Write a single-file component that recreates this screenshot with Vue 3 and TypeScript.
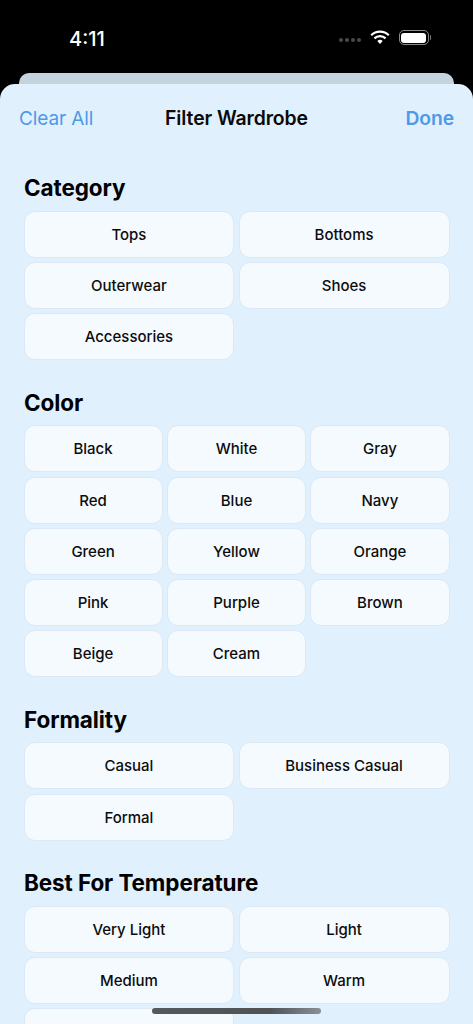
<script setup lang="ts">
interface Section {
  title: string
  cols: number
  items: string[]
}
const sections: Section[] = [
  { title: 'Category', cols: 2, items: ['Tops', 'Bottoms', 'Outerwear', 'Shoes', 'Accessories'] },
  { title: 'Color', cols: 3, items: ['Black', 'White', 'Gray', 'Red', 'Blue', 'Navy', 'Green', 'Yellow', 'Orange', 'Pink', 'Purple', 'Brown', 'Beige', 'Cream'] },
  { title: 'Formality', cols: 2, items: ['Casual', 'Business Casual', 'Formal'] },
  { title: 'Best For Temperature', cols: 2, items: ['Very Light', 'Light', 'Medium', 'Warm', ''] }
]
</script>

<template>
  <div class="screen">
    <div class="status">
      <span class="time">4:11</span>
      <div class="status-icons">
        <div class="dots"><i></i><i></i><i></i><i></i></div>
        <svg class="wifi" width="20" height="15" viewBox="0 0 20 15">
          <path d="M1.2 5.2a12.6 12.6 0 0 1 17.6 0" fill="none" stroke="#fff" stroke-width="2.2" />
          <path d="M4.4 8.4a8 8 0 0 1 11.2 0" fill="none" stroke="#fff" stroke-width="2.2" />
          <path d="M7.3 11.1a3.9 3.9 0 0 1 5.4 0L10 14z" fill="#fff" />
        </svg>
        <div class="battery"><div class="battery-fill"></div></div>
        <div class="battery-cap"></div>
      </div>
    </div>
    <div class="back-sheet"></div>
    <div class="sheet">
      <header class="nav">
        <span class="clear">Clear All</span>
        <span class="title">Filter Wardrobe</span>
        <span class="done">Done</span>
      </header>
      <section v-for="s in sections" :key="s.title" class="section">
        <h2>{{ s.title }}</h2>
        <div class="grid" :class="s.cols === 3 ? 'three' : 'two'">
          <button v-for="item in s.items" :key="item" class="chip">{{ item }}</button>
        </div>
      </section>
    </div>
    <div class="home"></div>
  </div>
</template>

<style>
html, body { margin: 0; background: #000; }
</style>

<style scoped>
.screen {
  position: relative;
  width: 473px;
  height: 1024px;
  overflow: hidden;
  background: #000;
  font-family: Inter, "Liberation Sans", sans-serif;
}
.status {
  height: 73px;
  display: flex;
  justify-content: space-between;
  align-items: flex-start;
  padding: 0 42px 0 69px;
  box-sizing: border-box;
}
.time {
  margin-top: 27px;
  color: #fff;
  font-size: 20px;
  line-height: 24px;
  font-weight: 500;
}
.status-icons {
  display: flex;
  align-items: center;
  margin-top: 30px;
}
.dots {
  display: flex;
  gap: 2px;
  margin-right: 9px;
  margin-top: 5px;
}
.dots i {
  width: 4px;
  height: 4px;
  border-radius: 50%;
  background: #4a4a4a;
}
.wifi { margin-right: 9px; }
.battery {
  width: 30px;
  height: 15px;
  box-sizing: border-box;
  border: 1px solid #8a8a8a;
  border-radius: 5px;
  padding: 1.5px;
}
.battery-fill {
  height: 100%;
  background: #fff;
  border-radius: 3px;
}
.battery-cap {
  width: 1.5px;
  height: 5px;
  margin-left: 1px;
  background: #777;
  border-radius: 0 1px 1px 0;
}
.back-sheet {
  height: 11px;
  margin: 0 19px;
  background: #c5d3dd;
  border-radius: 10px 10px 0 0;
}
.sheet {
  height: 940px;
  background: #e1f0fd;
  border-radius: 15px 15px 0 0;
  padding: 0 23.5px;
  box-sizing: border-box;
}
.nav {
  position: relative;
  display: flex;
  justify-content: space-between;
  align-items: center;
  height: 68px;
  margin: 0 -4.5px 0 -4.5px;
  font-size: 19px;
  letter-spacing: -0.1px;
}
.clear { color: #4d9ae8; }
.done { color: #4d9ae8; font-weight: 600; font-size: 19.3px; }
.title {
  position: absolute;
  left: 0;
  right: 0;
  text-align: center;
  font-weight: 600;
  font-size: 19.4px;
  color: #0a0a0a;
  pointer-events: none;
}
.section {
  padding-top: 22px;
  margin-bottom: 1px;
}
.section + .section { padding-top: 27.3px; margin-top: 0; }
h2 {
  margin: 0 0 8.7px;
  font-size: 22.5px;
  line-height: 28px;
  font-weight: 700;
  color: #000;
  letter-spacing: -0.1px;
  padding-left: 0.5px;
}
.grid {
  display: grid;
  gap: 4.3px;
  grid-auto-rows: 47px;
}
.two { grid-template-columns: repeat(2, 1fr); }
.three { grid-template-columns: repeat(3, 1fr); }
.chip {
  margin: 0;
  padding: 0;
  background: #f5faff;
  border: 1.5px solid #dce9f4;
  border-radius: 11px;
  box-sizing: border-box;
  font-family: inherit;
  font-size: 15px;
  font-weight: 450;
  color: #0c0c0c;
}
.home {
  position: absolute;
  left: 152px;
  top: 1008px;
  width: 169px;
  height: 6px;
  border-radius: 3px;
  background: linear-gradient(90deg, #55595c, #4f5356 70%, #8a9095);
}
</style>
